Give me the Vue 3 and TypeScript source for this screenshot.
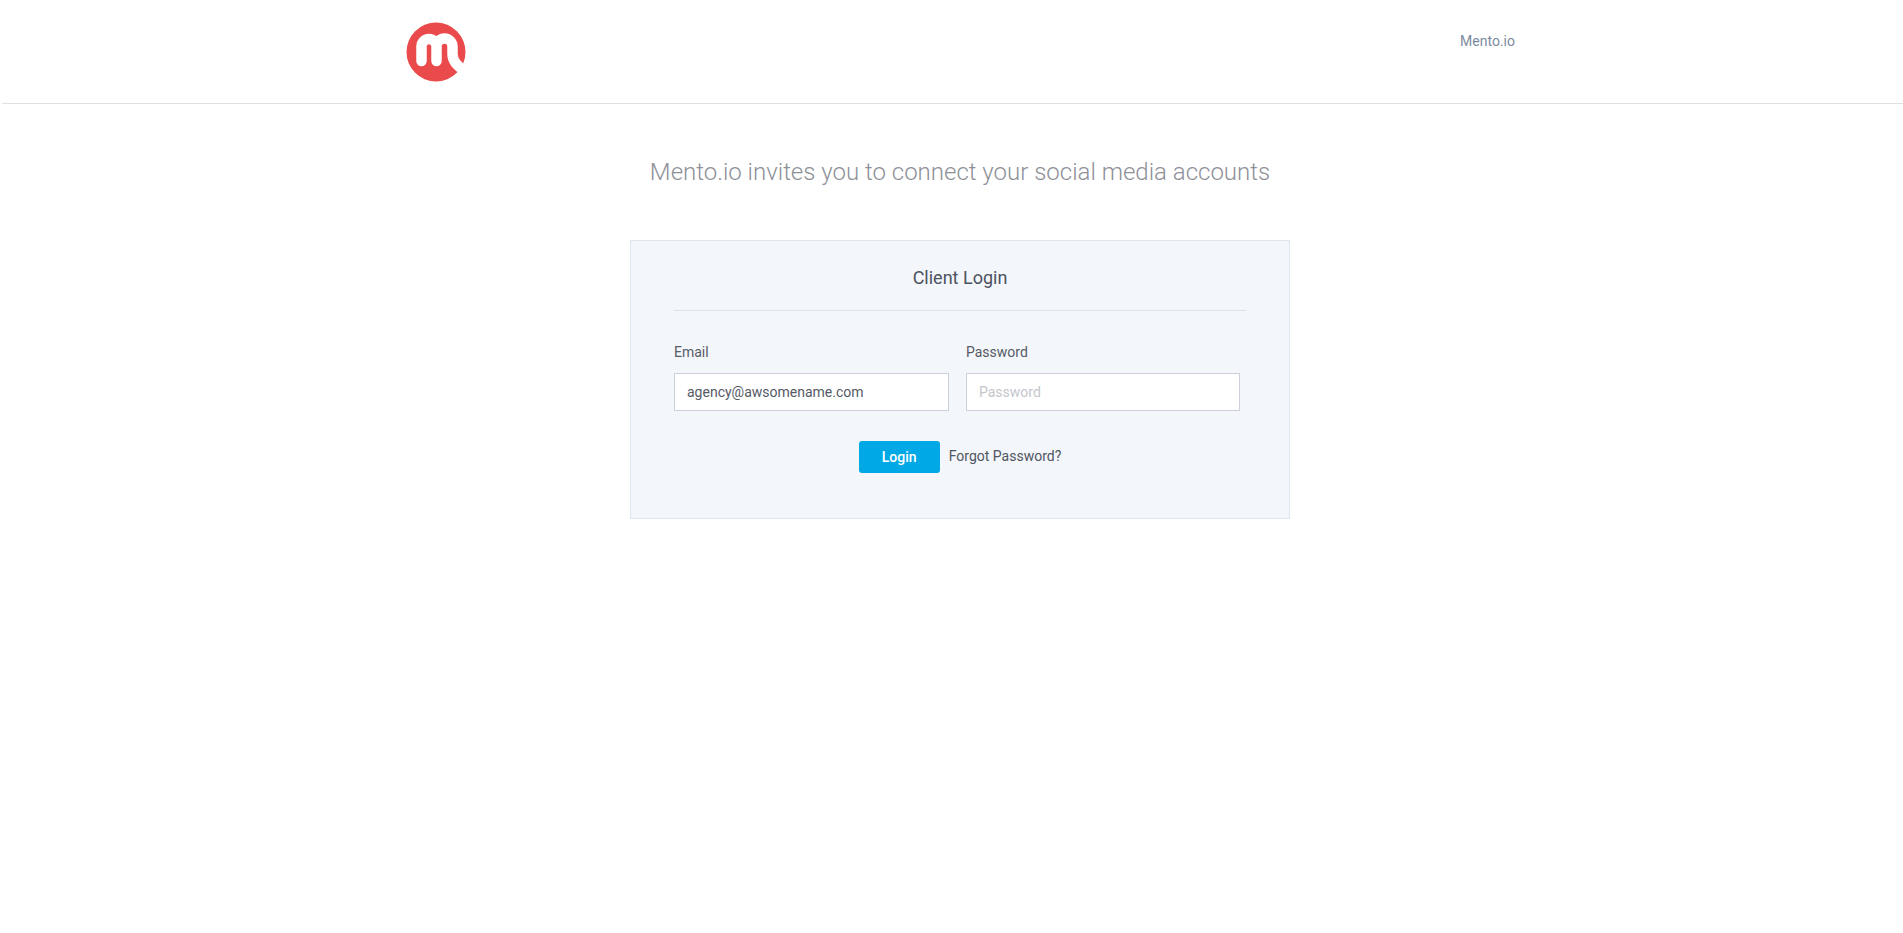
<script setup lang="ts">
import { ref } from 'vue'

const email = ref('agency@awsomename.com')
const password = ref('')
</script>

<template>
  <div class="page">
    <header class="topbar">
      <div class="topbar-inner">
        <svg class="logo" width="60" height="62" viewBox="0 0 60 62">
          <circle cx="30" cy="30" r="29.5" fill="#ea4a4b" />
          <path
            d="M15.5 39V24.5a7.5 7.5 0 0 1 15 0V39V24.5a8 8 0 0 1 16 0V32c0 7 4 12 13 17"
            fill="none"
            stroke="#fff"
            stroke-width="10.5"
            stroke-linecap="round"
            stroke-linejoin="round"
          />
        </svg>
        <a class="brand-link">Mento.io</a>
      </div>
    </header>

    <main class="content">
      <h1 class="headline">Mento.io invites you to connect your social media accounts</h1>

      <section class="panel">
        <h2 class="panel-title">Client Login</h2>
        <div class="fields">
          <label class="field">
            <span class="field-label">Email</span>
            <input v-model="email" class="field-input" type="text" placeholder="Email" />
          </label>
          <label class="field field-narrow">
            <span class="field-label">Password</span>
            <input v-model="password" class="field-input" type="password" placeholder="Password" />
          </label>
        </div>
        <div class="actions">
          <button class="login-button" type="button">Login</button>
          <a class="forgot-link">Forgot Password?</a>
        </div>
      </section>
    </main>
  </div>
</template>

<style>
html,
body {
  background: #fff;
}
</style>

<style scoped>
.page {
  min-height: 933px;
  font-family: Roboto, "Liberation Sans", sans-serif;
}

.topbar {
  height: 104px;
  box-sizing: border-box;
  margin-left: 2px;
  border-bottom: 1px solid #e0e0e0;
}

.topbar-inner {
  width: 1110px;
  margin-left: 404px;
  padding-top: 22px;
  display: flex;
  justify-content: space-between;
  align-items: flex-start;
}

.logo {
  display: block;
}

.brand-link {
  font-size: 14px;
  line-height: 22px;
  margin-top: 8px;
  margin-right: 1px;
  color: #7c8aa0;
}

.content {
  padding-left: 17px;
  display: flex;
  flex-direction: column;
  align-items: center;
}

.headline {
  margin: 52px 0 0;
  font-size: 24px;
  line-height: 32px;
  font-weight: 300;
  color: #8e9098;
}

.panel {
  width: 660px;
  height: 279px;
  box-sizing: border-box;
  margin-top: 52px;
  padding: 0 43px;
  background: #f3f6fa;
  border: 1px solid #dfe5ee;
}

.panel-title {
  margin: 0;
  height: 69px;
  line-height: 73px;
  border-bottom: 1px solid #dde1e8;
  text-align: center;
  font-size: 18px;
  font-weight: 400;
  color: #4c5260;
}

.fields {
  display: flex;
  gap: 17px;
  margin-top: 31px;
}

.field {
  width: 275px;
  display: flex;
  flex-direction: column;
}

.field-narrow {
  width: 274px;
}

.field-label {
  font-size: 14px;
  line-height: 20px;
  color: #565b66;
  margin-bottom: 11px;
}

.field-input {
  width: 100%;
  height: 38px;
  box-sizing: border-box;
  padding: 0 12px 1px;
  background: #fff;
  border: 1px solid #cdd0dc;
  font-family: inherit;
  font-size: 14px;
  color: #555a65;
  outline: none;
}

.field-input::placeholder {
  color: #c4c6cc;
  opacity: 1;
}

.actions {
  display: flex;
  justify-content: center;
  align-items: center;
  gap: 9px;
  margin-top: 30px;
}

.login-button {
  width: 81px;
  height: 32px;
  border: 0;
  border-radius: 3px;
  background: #00a9e5;
  color: #fff;
  font-family: inherit;
  font-size: 14px;
  font-weight: 500;
  cursor: pointer;
}

.forgot-link {
  font-size: 14px;
  color: #4f5562;
  margin-top: -2px;
}
</style>
